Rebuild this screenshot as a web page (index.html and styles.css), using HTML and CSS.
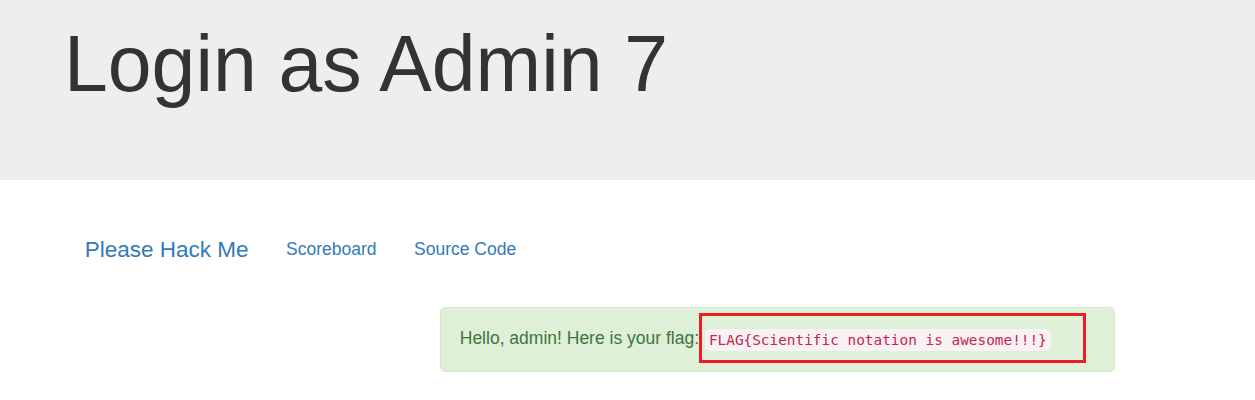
FILE: index.html
```html
<!DOCTYPE html>
<html lang="en">
<head>
<meta charset="utf-8">
<title>Login as Admin 7</title>
<link rel="stylesheet" href="styles.css">
</head>
<body>
<header class="jumbotron">
  <h1 class="title">Login as Admin 7</h1>
</header>
<nav class="navbar">
  <a class="brand" href="#">Please Hack Me</a>
  <a class="nav-link" href="#">Scoreboard</a>
  <a class="nav-link" href="#">Source Code</a>
</nav>
<main class="content">
  <div class="alert">
    Hello, admin! Here is your flag: <code class="flag">FLAG{Scientific notation is awesome!!!}</code>
    <span class="highlight"></span>
  </div>
</main>
</body>
</html>
```
FILE: styles.css
```css
html, body {
  margin: 0;
  padding: 0;
}
body {
  font-family: "Liberation Sans", Arial, sans-serif;
  color: #333;
  background: #fff;
  width: 1255px;
}
.jumbotron {
  background: #eee;
  height: 180px;
  box-sizing: border-box;
  padding: 21px 0 0 64px;
}
.title {
  margin: 0;
  font-size: 78.75px;
  font-weight: 500;
  line-height: 1.1;
  color: #333;
}
.navbar {
  display: flex;
  align-items: flex-start;
  margin-top: 38px;
  height: 62.5px;
  padding-left: 66px;
}
.brand, .nav-link {
  color: #337ab7;
  text-decoration: none;
  padding: 18.75px;
  line-height: 25px;
}
.brand {
  font-size: 22.5px;
}
.nav-link {
  font-size: 17.5px;
}
.content {
  padding-left: 440px;
  margin-top: 26px;
}
.alert {
  position: relative;
  width: 675px;
  box-sizing: border-box;
  background: #dff0d8;
  border: 1.25px solid #d6e9c6;
  border-radius: 5px;
  color: #3c763d;
  font-size: 17.5px;
  line-height: 25px;
  padding: 18.5px 18.75px 19px 18.75px;
}
.flag {
  font-family: "DejaVu Sans Mono", "Liberation Mono", monospace;
  font-size: 14.4px;
  color: #c7254e;
  background: #f9f2f4;
  border-radius: 5px;
  padding: 3px 4px 2.5px;
  margin-left: 1px;
  position: relative;
  top: 1px;
}
.highlight {
  position: absolute;
  left: 258px;
  top: 5.75px;
  width: 387px;
  height: 50px;
  box-sizing: border-box;
  border: 3px solid #ed1c24;
}
```
